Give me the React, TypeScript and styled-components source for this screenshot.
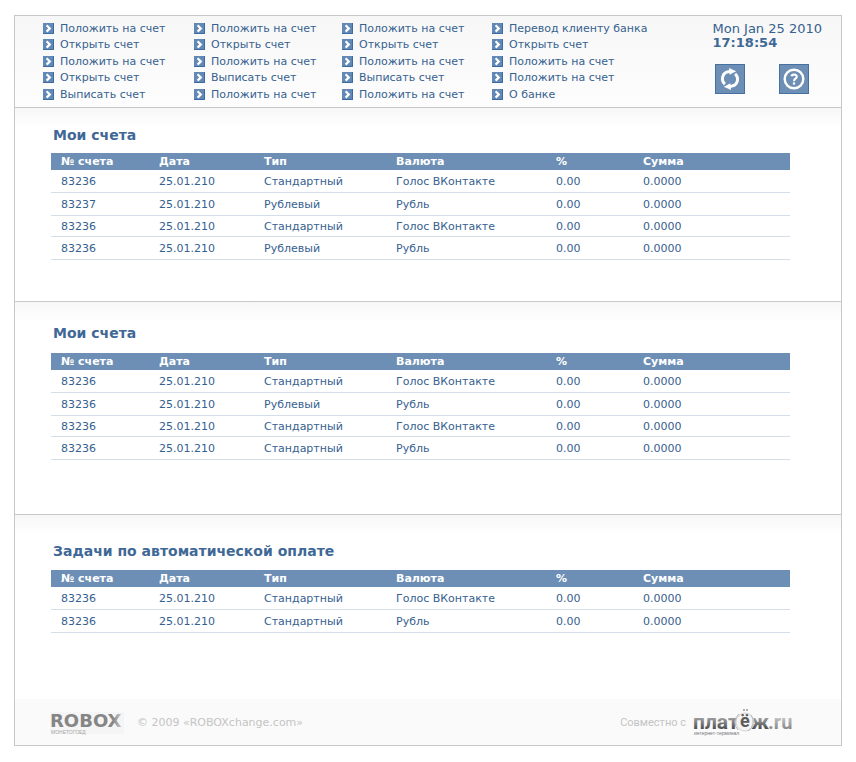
import React from "react";
import styled, { createGlobalStyle } from "styled-components";

const GlobalStyle = createGlobalStyle`
  *, *::before, *::after { box-sizing: border-box; }
  body {
    margin: 0;
    background: #ffffff;
    color: #36618f;
    font-family: Verdana, "DejaVu Sans", sans-serif;
    font-size: 11px;
  }
`;

const Page = styled.div`
  margin: 15px 14px;
  border: 1px solid #c8c8c8;
`;

const Header = styled.header`
  display: flex;
  justify-content: space-between;
  padding: 4px 19px 5px 28px;
  border-bottom: 1px solid #c8c8c8;
  background: linear-gradient(#f7f7f7, #fdfdfd);
`;

const Nav = styled.nav`
  display: grid;
  grid-template-columns: 151px 148px 150px auto;
`;

const NavColumn = styled.ul`
  display: flex;
  flex-direction: column;
  justify-content: space-between;
  height: 82px;
  margin: 0;
  padding: 0;
  list-style: none;
`;

const NavLink = styled.a`
  display: flex;
  align-items: center;
  gap: 6px;
  height: 16px;
  color: inherit;
  text-decoration: none;
  white-space: nowrap;

  &:hover { text-decoration: underline; }
`;

const Aside = styled.div`
  display: flex;
  flex-direction: column;
  gap: 14px;
  padding-top: 2px;
`;

const Clock = styled.time`
  font-size: 13px;
  line-height: 14px;
  white-space: nowrap;

  strong { display: block; color: #3f6896; }
`;

const Actions = styled.div`
  display: flex;
  gap: 34px;
  padding-left: 2px;
`;

const IconButton = styled.button`
  width: 30px;
  height: 30px;
  padding: 0;
  border: 1px solid #4470a2;
  background: #6d8fb5;
  cursor: pointer;

  svg { display: block; }
`;

const Section = styled.section<{ $top: number; $bottom: number; $divided: boolean }>`
  padding: ${(p) => p.$top}px 51px ${(p) => p.$bottom}px 36px;
  border-bottom: ${(p) => (p.$divided ? "1px solid #c8c8c8" : "none")};
  background: linear-gradient(#f7f7f7, #ffffff 20px);
`;

const Title = styled.h2<{ $gap: number }>`
  margin: 0 0 ${(p) => p.$gap}px;
  padding-left: 2px;
  color: #3f6896;
  font-size: 14px;
  line-height: 18px;
`;

const Table = styled.table`
  width: 100%;
  border-collapse: separate;
  border-spacing: 0;
  table-layout: fixed;
`;

const Col = styled.col<{ $width?: number }>`
  width: ${(p) => (p.$width ? `${p.$width}px` : "auto")};
`;

const HeadCell = styled.th`
  height: 17px;
  padding: 0 0 0 10px;
  background: #6d8fb5;
  color: #ffffff;
  line-height: 16px;
  text-align: left;
  white-space: nowrap;
`;

const Row = styled.tr<{ $compact: boolean }>`
  height: ${(p) => (p.$compact ? 21 : 23)}px;
`;

const Cell = styled.td`
  padding: 2px 0 0 10px;
  border-bottom: 1px solid #d2dfeb;
  line-height: 14px;
  white-space: nowrap;
`;

const Footer = styled.footer`
  display: flex;
  align-items: center;
  justify-content: space-between;
  height: 46px;
  padding: 0 49px 0 35px;
  background: #fafafa;
  color: #c4c4c4;
`;

const FooterGroup = styled.div`
  display: flex;
  align-items: center;
  gap: 13px;
`;

const Partner = styled.div`
  display: flex;
  align-items: center;
  gap: 7px;
  font-family: Roboto, sans-serif;
`;

const deposit = "Положить на счет";
const open = "Открыть счет";
const issue = "Выписать счет";

const menu = [
  [deposit, open, deposit, open, issue],
  [deposit, open, deposit, issue, deposit],
  [deposit, open, deposit, issue, deposit],
  ["Перевод клиенту банка", open, deposit, deposit, "О банке"],
];

const columns = ["№ счета", "Дата", "Тип", "Валюта", "%", "Сумма"];
const columnWidths = [98, 105, 132, 160, 87];

type Account = [string, string, string];

interface Block {
  title: string;
  top: number;
  gap: number;
  bottom: number;
  rows: Account[];
}

const blocks: Block[] = [
  {
    title: "Мои счета",
    top: 18,
    gap: 9,
    bottom: 41,
    rows: [
      ["83236", "Стандартный", "Голос ВКонтакте"],
      ["83237", "Рублевый", "Рубль"],
      ["83236", "Стандартный", "Голос ВКонтакте"],
      ["83236", "Рублевый", "Рубль"],
    ],
  },
  {
    title: "Мои счета",
    top: 22,
    gap: 11,
    bottom: 54,
    rows: [
      ["83236", "Стандартный", "Голос ВКонтакте"],
      ["83236", "Рублевый", "Рубль"],
      ["83236", "Стандартный", "Голос ВКонтакте"],
      ["83236", "Стандартный", "Рубль"],
    ],
  },
  {
    title: "Задачи по автоматической оплате",
    top: 27,
    gap: 10,
    bottom: 66,
    rows: [
      ["83236", "Стандартный", "Голос ВКонтакте"],
      ["83236", "Стандартный", "Рубль"],
    ],
  },
];

const ArrowIcon = () => (
  <svg width="11" height="11" viewBox="0 0 11 11" aria-hidden="true">
    <rect width="11" height="11" fill="#6288b5" />
    <path d="M0 10.5H10.5V0" fill="none" stroke="#3b6ba2" />
    <path d="M3.6 2.2 6.8 5.4 3.6 8.6" fill="none" stroke="#fff" strokeWidth="2.2" />
  </svg>
);

const RefreshIcon = () => (
  <svg width="28" height="28" viewBox="0 0 28 28" aria-hidden="true">
    <g fill="none" stroke="#fff" strokeWidth="3">
      <path d="M14 6.6C5.6 7 4.8 15.4 8.9 19.2" />
      <path d="M14 21.4C22.4 21 23.2 12.6 19.1 8.8" />
    </g>
    <path d="M13 3 20.2 6.2 13.6 9.8Z" fill="#fff" />
    <path d="M15 25 7.8 21.8 14.4 18.2Z" fill="#fff" />
  </svg>
);

const HelpIcon = () => (
  <svg width="28" height="28" viewBox="0 0 28 28" aria-hidden="true">
    <circle cx="14" cy="14" r="9.3" fill="none" stroke="#fff" strokeWidth="2.4" />
    <path d="M11.4 11.2C12 9 17 9 16.8 11.8C16.6 13.5 14 13.4 14 16.2" fill="none" stroke="#fff" strokeWidth="2.1" />
    <rect x="12.9" y="17.4" width="2.2" height="2.2" fill="#fff" />
  </svg>
);

const RoboxLogo = () => (
  <svg width="74" height="26" viewBox="0 0 74 26" role="img" aria-label="ROBOX">
    <defs>
      <linearGradient id="robox-fade" x1="0" x2="1" y1="0" y2="0">
        <stop offset="0.88" stopColor="#858585" />
        <stop offset="0.96" stopColor="#b4b4b4" />
      </linearGradient>
    </defs>
    <rect y="3" width="74" height="22" fill="#f5f5f5" />
    <text x="0" y="18" fontFamily='"DejaVu Sans", sans-serif' fontWeight="700" fontSize="18" fill="url(#robox-fade)">ROBOX</text>
    <text x="1" y="25" fontFamily='"Liberation Sans", sans-serif' fontSize="5" fill="#a8a8a8">МОНЕТОГОЕД</text>
  </svg>
);

const PlatezhLogo = () => (
  <svg width="99" height="28" viewBox="0 0 99 28" role="img" aria-label="платёж.ru">
    <defs>
      <linearGradient id="platezh-shade" x1="0" x2="0" y1="0" y2="1">
        <stop offset="0.3" stopColor="#a4a4a4" />
        <stop offset="0.8" stopColor="#4c4c4c" />
      </linearGradient>
      <linearGradient id="platezh-tail" x1="0" x2="0" y1="0" y2="1">
        <stop offset="0.3" stopColor="#c2c2c2" />
        <stop offset="0.8" stopColor="#888888" />
      </linearGradient>
    </defs>
    <g fontFamily="Roboto, sans-serif" fontWeight="700" fontSize="21">
      <text x="0" y="21" fill="url(#platezh-shade)">плат</text>
      <text x="58" y="21" fill="url(#platezh-shade)">ж</text>
      <text x="75" y="21" fontSize="20" fill="url(#platezh-tail)">.ru</text>
      <circle cx="52" cy="14" r="9" fill="#f4f4f4" stroke="#d4d4d4" />
      <path d="M46 6A11 11 0 0 0 45 22M58 7A11 11 0 0 1 55 23" fill="none" stroke="#b5b5b5" />
      <text x="47" y="19" fontSize="18" fill="#5c5c5c">ё</text>
    </g>
    <circle cx="51" cy="2" r="1" fill="#999999" />
    <circle cx="54" cy="2" r="1" fill="#999999" />
    <text x="1" y="27" fontFamily='"Liberation Sans", sans-serif' fontSize="5" fill="#777777">интернет-терминал</text>
  </svg>
);

function AccountTable({ rows, label }: { rows: Account[]; label: string }) {
  return (
    <Table aria-label={label}>
      <colgroup>
        {columnWidths.map((width, i) => (
          <Col key={i} $width={width} />
        ))}
        <Col />
      </colgroup>
      <thead>
        <tr>
          {columns.map((name) => (
            <HeadCell key={name} scope="col">{name}</HeadCell>
          ))}
        </tr>
      </thead>
      <tbody>
        {rows.map(([account, type, currency], i) => (
          <Row key={i} $compact={i === 2}>
            <Cell>{account}</Cell>
            <Cell>25.01.210</Cell>
            <Cell>{type}</Cell>
            <Cell>{currency}</Cell>
            <Cell>0.00</Cell>
            <Cell>0.0000</Cell>
          </Row>
        ))}
      </tbody>
    </Table>
  );
}

export default function App() {
  return (
    <>
      <GlobalStyle />
      <Page>
        <Header>
          <Nav>
            {menu.map((items, c) => (
              <NavColumn key={c}>
                {items.map((item, i) => (
                  <li key={i}>
                    <NavLink href="#">
                      <ArrowIcon />
                      {item}
                    </NavLink>
                  </li>
                ))}
              </NavColumn>
            ))}
          </Nav>
          <Aside>
            <Clock dateTime="2010-01-25T17:18:54">
              Mon Jan 25 2010
              <strong>17:18:54</strong>
            </Clock>
            <Actions>
              <IconButton type="button" aria-label="Обновить"><RefreshIcon /></IconButton>
              <IconButton type="button" aria-label="Помощь"><HelpIcon /></IconButton>
            </Actions>
          </Aside>
        </Header>
        <main>
          {blocks.map((block, i) => (
            <Section key={i} $top={block.top} $bottom={block.bottom} $divided={i < blocks.length - 1}>
              <Title $gap={block.gap}>{block.title}</Title>
              <AccountTable rows={block.rows} label={block.title} />
            </Section>
          ))}
        </main>
        <Footer>
          <FooterGroup>
            <RoboxLogo />
            <span>© 2009 «ROBOXchange.com»</span>
          </FooterGroup>
          <Partner>
            <span>Совместно с</span>
            <PlatezhLogo />
          </Partner>
        </Footer>
      </Page>
    </>
  );
}
